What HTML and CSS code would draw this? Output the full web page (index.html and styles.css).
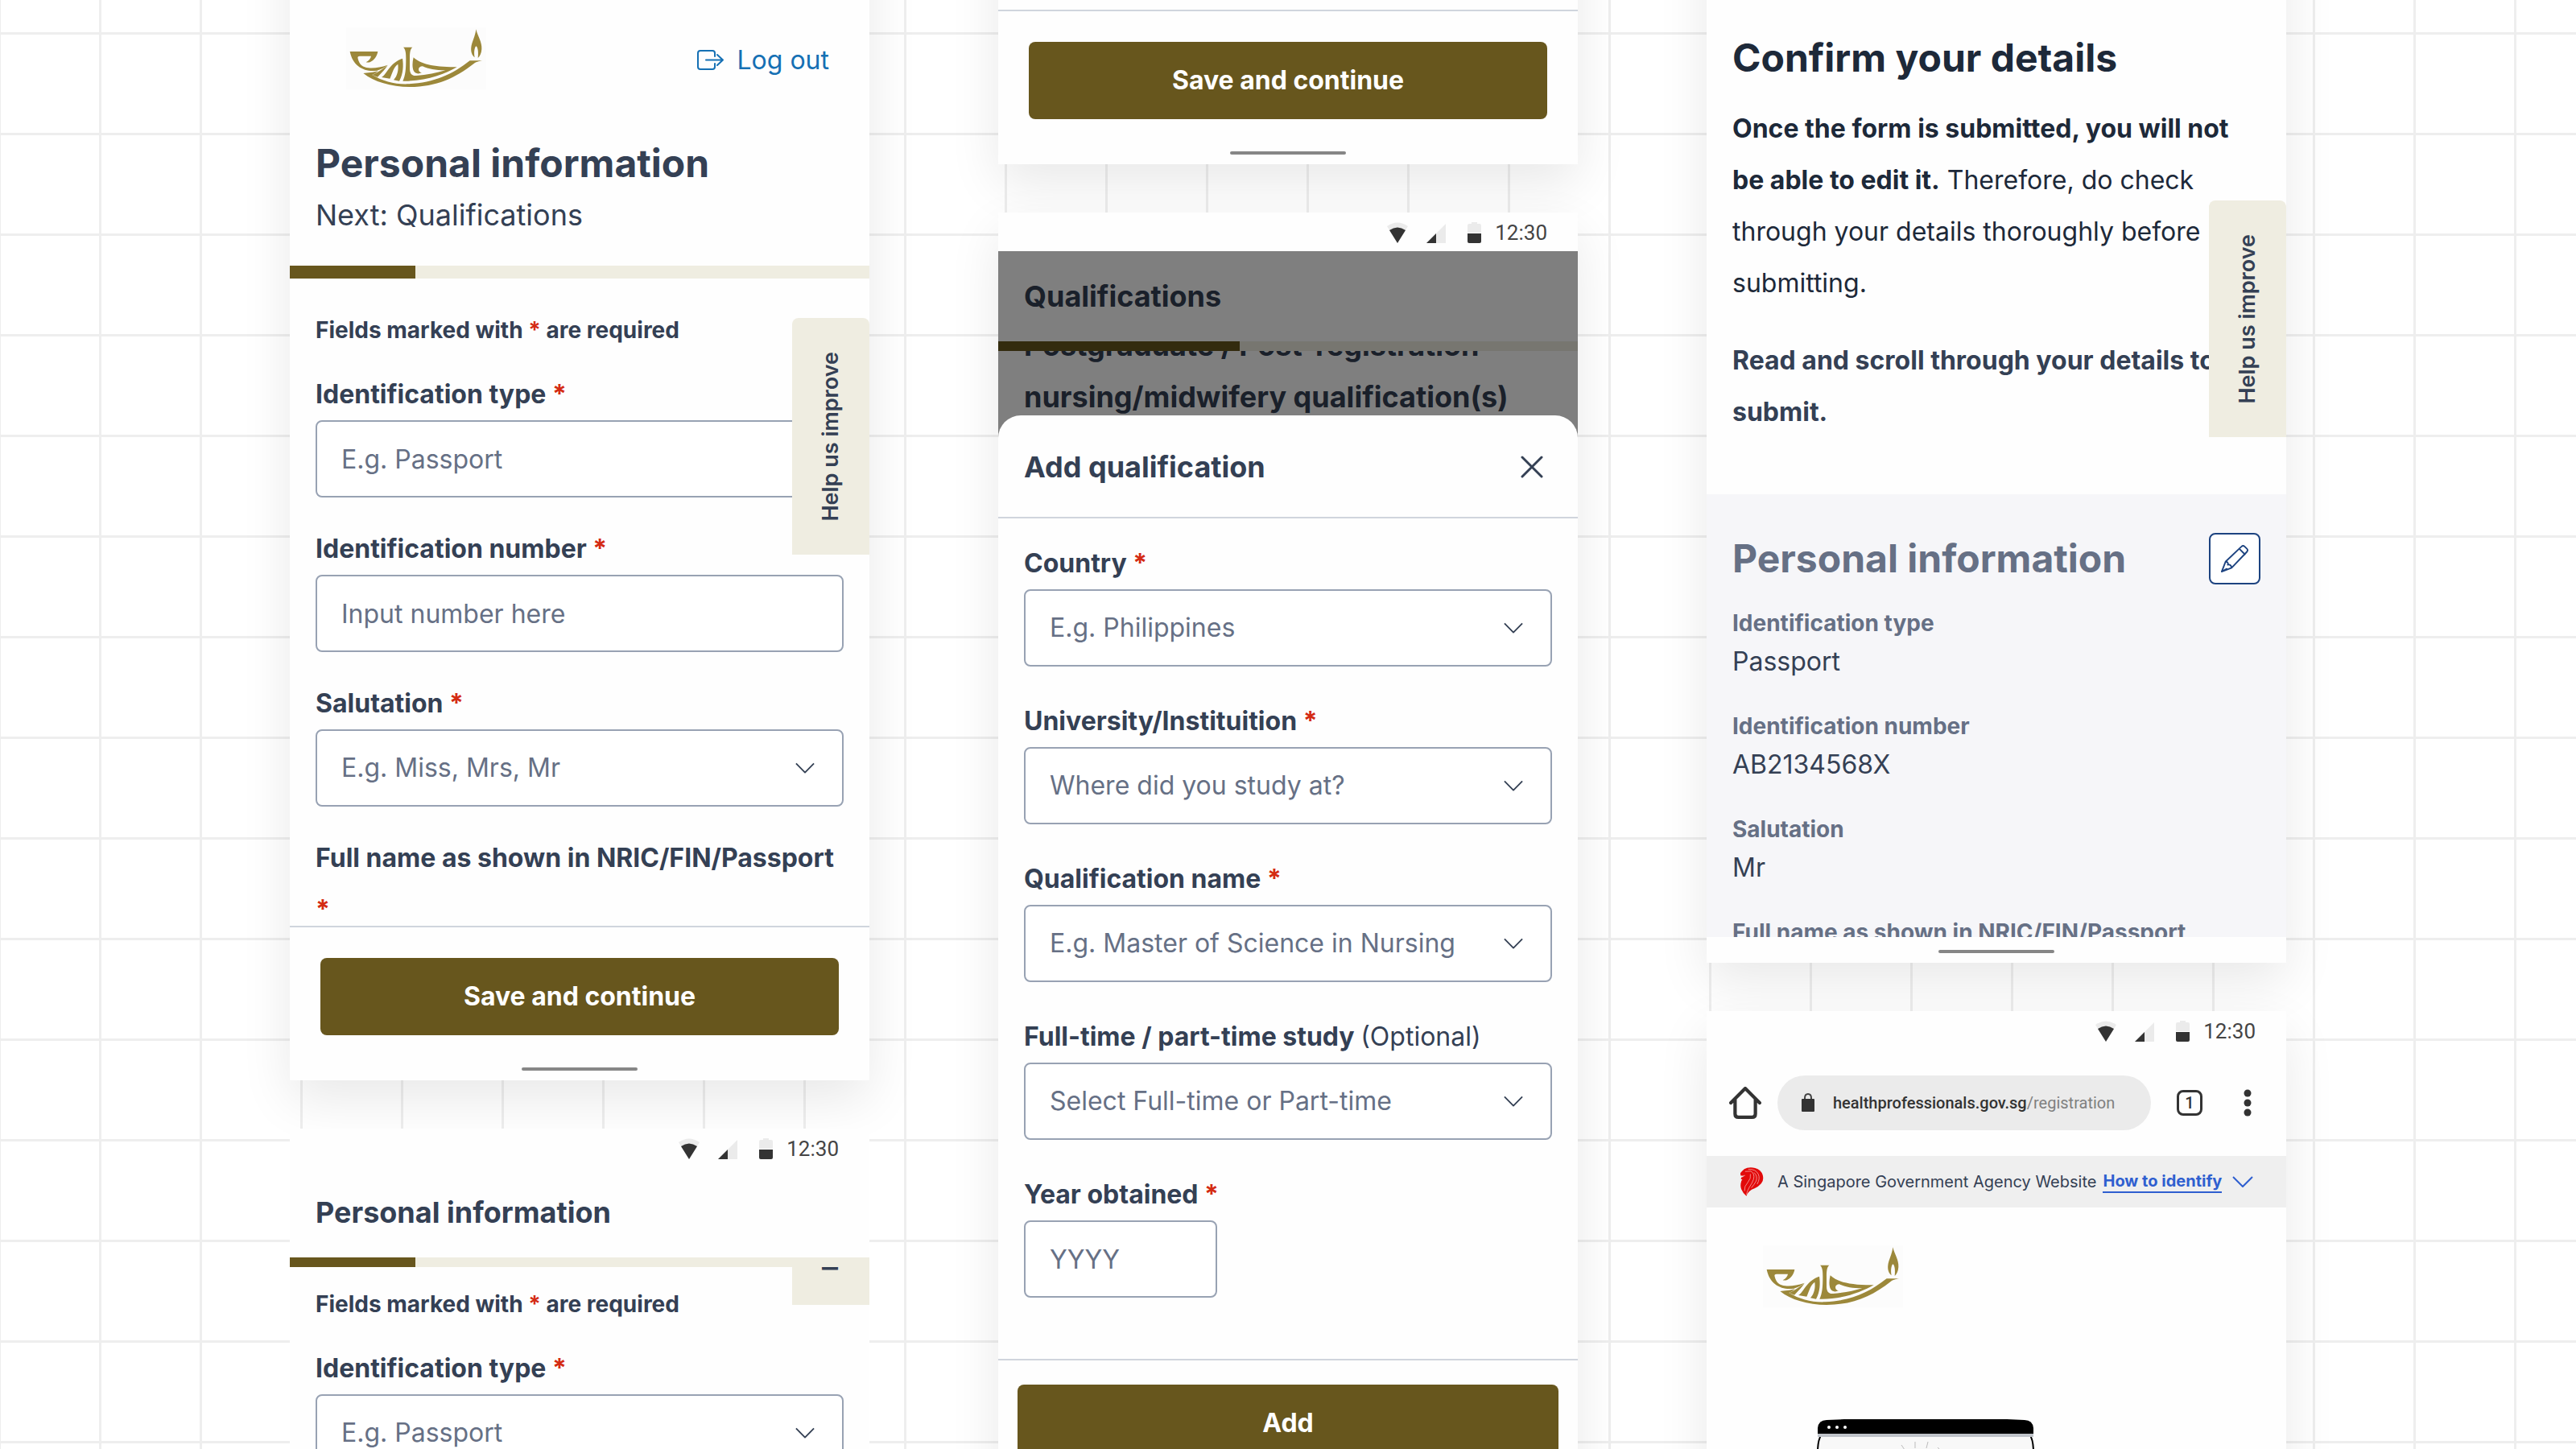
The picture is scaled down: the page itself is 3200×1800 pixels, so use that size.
FILE: index.html
```html
<!DOCTYPE html>
<html lang="en">
<head>
<meta charset="utf-8">
<meta name="viewport" content="width=device-width, initial-scale=1">
<title>Nursing registration</title>
<link rel="stylesheet" href="styles.css">
</head>
<body>
<svg class="sprite" aria-hidden="true">
  <symbol id="chevron" viewBox="0 0 26 14"><path d="M1 1l12 12L25 1" fill="none" stroke="currentColor" stroke-width="2" stroke-linejoin="round"/></symbol>
  <symbol id="lamp" viewBox="33 43 522 231">
    <rect x="33" y="43" width="522" height="231" fill="#fcfcfc"/>
    <g fill="#9c883a">
      <path d="M517 50C523 76 540 98 538 124C537 140 531 151 524 157C526 138 525 118 517 113C510 120 509 140 512 155C502 147 497 133 499 117C501 98 514 78 517 50Z"/>
      <path d="M47 133H151C148 151 137 166 123 172C118 174 112 174 107 173C118 167 124 160 126 150H84C77 150 75 153 77 160C82 182 96 192 116 194C140 196 160 192 188 183C178 191 165 199 148 204C104 211 58 190 47 133Z"/>
      <path d="M97 214C112 212 135 211 152 205C144 213 136 218 130 220C170 244 215 256 265 254C360 250 430 218 494 167H541C525 170 518 172 510 177C440 232 370 264 270 265C200 265 135 245 97 214Z"/>
      <path d="M130 220C145 214 168 200 188 184C178 200 166 212 150 228Z"/>
      <path d="M165 229C185 217 196 174 243 159C247 185 246 215 231 243L210 239C224 223 229 202 226 180C210 190 206 212 196 234Z"/>
      <path d="M246 117H280C271 123 270 140 270 160V196C270 216 278 224 294 223C334 220 370 213 403 203C365 203 340 198 318 188C306 188 301 196 304 204C306 209 310 211 315 211C304 218 290 216 285 206C279 195 279 175 284 155C310 180 360 192 446 191C400 217 330 245 244 243C254 222 256 200 256 160C256 140 255 125 246 117Z"/>
    </g>
  </symbol>
  <symbol id="status" viewBox="0 0 117 28">
    <path d="M0 6Q13-3 26 6L13 27Z" fill="#ebebeb"/>
    <path d="M3 11Q13 4 23 11L13 27Z" fill="#333"/>
    <path d="M73 3V27H49Z" fill="#ebebeb"/>
    <path d="M61 15V27H49Z" fill="#333"/>
    <path d="M105 1h7v2h3q2 0 2 2v9h-17V5q0-2 2-2h3z" fill="#ebebeb"/>
    <path d="M100 15h17v10q0 2-2 2h-13q-2 0-2-2z" fill="#333"/>
  </symbol>
</svg>

<main class="board">
  <div class="column">
    <section class="phone phone--top">
      <header class="site-head">
        <div class="brand-row">
          <svg class="lamp" role="img" aria-label="Nursing board"><use href="#lamp"/></svg>
          <a class="logout" href="#logout">
            <svg viewBox="0 0 34 26" aria-hidden="true"><path d="M22 8V4q0-3-3-3H4Q1 1 1 4v17q0 3 3 3h15q3 0 3-3v-4M11 12.500H32M25 6l7 6.500L25 19" fill="none" stroke="currentColor" stroke-width="2" stroke-linejoin="round" stroke-linecap="round"/></svg>
            Log out
          </a>
        </div>
        <h1 class="title">Personal information</h1>
        <p class="next">Next: Qualifications</p>
      </header>
      <div class="progress progress--thick"><div class="progress-fill" style="width:21.7%"></div></div>
      <div class="viewport viewport--form">
        <form class="form">
          <p class="note">Fields marked with <span class="req">*</span> are required</p>
          <div class="field">
            <label for="id-type">Identification type <span class="req">*</span></label>
            <input id="id-type" type="text" placeholder="E.g. Passport">
          </div>
          <div class="field">
            <label for="id-number">Identification number <span class="req">*</span></label>
            <input id="id-number" type="text" placeholder="Input number here">
          </div>
          <div class="field">
            <label for="salutation">Salutation <span class="req">*</span></label>
            <div class="select"><select id="salutation"><option>E.g. Miss, Mrs, Mr</option></select><svg><use href="#chevron"/></svg></div>
          </div>
          <div class="field">
            <label for="full-name">Full name as shown in NRIC/FIN/Passport <span class="req">*</span></label>
            <input id="full-name" type="text">
          </div>
        </form>
        <button class="help help--form" type="button"><span>Help us improve</span></button>
      </div>
      <footer class="actions">
        <button class="primary" type="button">Save and continue</button>
        <div class="home-bar"></div>
      </footer>
    </section>

    <section class="phone phone--flat">
      <div class="status"><svg><use href="#status"/></svg><span>12:30</span></div>
      <h2 class="compact-title">Personal information</h2>
      <div class="progress"><div class="progress-fill" style="width:21.7%"></div></div>
      <div class="viewport">
        <form class="form form--tight">
          <p class="note">Fields marked with <span class="req">*</span> are required</p>
          <div class="field">
            <label for="id-type-2">Identification type <span class="req">*</span></label>
            <div class="select"><select id="id-type-2"><option>E.g. Passport</option></select><svg><use href="#chevron"/></svg></div>
          </div>
        </form>
        <button class="help help--scrolled" type="button"><span>Help us improve</span></button>
      </div>
    </section>
  </div>

  <div class="column">
    <section class="phone phone--top phone--ending">
      <footer class="actions">
        <button class="primary" type="button">Save and continue</button>
        <div class="home-bar"></div>
      </footer>
    </section>

    <section class="phone">
      <div class="status"><svg><use href="#status"/></svg><span>12:30</span></div>
      <div class="dimmed">
        <h2 class="compact-title">Qualifications</h2>
        <div class="progress"><div class="progress-fill" style="width:41.7%"></div></div>
        <div class="viewport">
          <h3 class="scrolled-heading">Postgraduate / Post-registration nursing/midwifery qualification(s)</h3>
        </div>
      </div>
      <div class="sheet">
        <header class="sheet-head">
          <h2>Add qualification</h2>
          <button type="button" class="close" aria-label="Close"><svg viewBox="0 0 28 28"><path d="M2 2l24 24M26 2L2 26" fill="none" stroke="currentColor" stroke-width="3" stroke-linecap="round"/></svg></button>
        </header>
        <form class="form form--sheet">
          <div class="field">
            <label for="country">Country <span class="req">*</span></label>
            <div class="select"><select id="country"><option>E.g. Philippines</option></select><svg><use href="#chevron"/></svg></div>
          </div>
          <div class="field">
            <label for="university">University/Instituition <span class="req">*</span></label>
            <div class="select"><select id="university"><option>Where did you study at?</option></select><svg><use href="#chevron"/></svg></div>
          </div>
          <div class="field">
            <label for="qualification">Qualification name <span class="req">*</span></label>
            <div class="select"><select id="qualification"><option>E.g. Master of Science in Nursing</option></select><svg><use href="#chevron"/></svg></div>
          </div>
          <div class="field">
            <label for="study-mode">Full-time / part-time study <span class="optional">(Optional)</span></label>
            <div class="select"><select id="study-mode"><option>Select Full-time or Part-time</option></select><svg><use href="#chevron"/></svg></div>
          </div>
          <div class="field">
            <label for="year">Year obtained <span class="req">*</span></label>
            <input id="year" class="short" type="text" placeholder="YYYY">
          </div>
        </form>
        <footer class="sheet-actions"><button class="primary" type="button">Add</button></footer>
      </div>
    </section>
  </div>

  <div class="column">
    <section class="phone phone--top">
      <div class="confirm">
        <h1 class="title title--dark">Confirm your details</h1>
        <p><strong>Once the form is submitted, you will not be able to edit it.</strong> Therefore, do check through your details thoroughly before submitting.</p>
        <p class="instruction">Read and scroll through your details to submit.</p>
        <button class="help help--confirm" type="button"><span>Help us improve</span></button>
      </div>
      <div class="summary">
        <div class="summary-head">
          <h2>Personal information</h2>
          <button type="button" class="edit" aria-label="Edit personal information"><svg viewBox="0 0 38 38"><path d="M2 36l5-13L28 3q2-2 4 0l3 3q2 2 0 4L15 31zM25 6l8 8M7 23q4 0 3 4q4-1 5 4M2 36l7-4" fill="none" stroke="currentColor" stroke-width="2" stroke-linejoin="round"/></svg></button>
        </div>
        <dl>
          <div><dt>Identification type</dt><dd>Passport</dd></div>
          <div><dt>Identification number</dt><dd>AB2134568X</dd></div>
          <div><dt>Salutation</dt><dd>Mr</dd></div>
          <div><dt>Full name as shown in NRIC/FIN/Passport</dt></div>
        </dl>
      </div>
      <div class="gesture"><div class="home-bar"></div></div>
    </section>

    <section class="phone">
      <div class="status"><svg><use href="#status"/></svg><span>12:30</span></div>
      <nav class="browser">
        <button type="button" class="bare" aria-label="Home"><svg class="home" viewBox="0 0 38 38"><path d="M2 19L19 2L36 19M7 15V32q0 4 4 4H27q4 0 4-4V15" fill="none" stroke="#333" stroke-width="4" stroke-linecap="round" stroke-linejoin="round"/></svg></button>
        <div class="address">
          <svg class="lock" viewBox="0 0 18 24"><path d="M5 9V6q0-5 4-5t4 5v3" fill="none" stroke="#444" stroke-width="2"/><rect x="1" y="7" width="16" height="16" rx="1" fill="#333"/></svg>
          <span class="url"><b>healthprofessionals.gov.sg</b>/registration</span>
        </div>
        <button type="button" class="tabs" aria-label="Open tabs">1</button>
        <button type="button" class="bare" aria-label="More"><svg class="dots" viewBox="0 0 10 34"><g fill="#333"><circle cx="5" cy="5" r="4.500"/><circle cx="5" cy="17" r="4.500"/><circle cx="5" cy="29" r="4.500"/></g></svg></button>
      </nav>
      <div class="gov">
        <svg class="lion" viewBox="64 358 90 110" aria-hidden="true">
          <path d="M66 380L72 373Q80 362 92 360Q108 357 122 361Q145 367 151 388Q156 408 145 420Q136 431 120 438Q96 446 89 467Q76 457 70 442Q64 428 70 410Q73 402 77 403L68 404L70 396L80 394L67 389Z" fill="#e20a0a"/>
          <path d="M84 374L106 373Q122 382 116 404Q110 420 100 434Q92 448 89 462M118 378Q132 390 126 410Q120 422 108 436M104 384Q108 400 94 416Q80 430 82 448M96 366Q124 364 134 384Q142 400 130 422M68 392L84 389" fill="none" stroke="#f7caca" stroke-width="2"/>
        </svg>
        <span>A Singapore Government Agency Website</span>
        <a href="#identify">How to identify</a>
        <svg class="gov-chevron"><use href="#chevron"/></svg>
      </div>
      <div class="landing">
        <svg class="lamp" role="img" aria-label="Nursing board"><use href="#lamp"/></svg>
        <svg class="illustration" viewBox="0 0 270 200" aria-hidden="true">
          <path d="M6 18Q1 26 1 40V199H269V40Q269 26 264 18Z" fill="#f8f8f8" stroke="#000" stroke-width="2"/>
          <path d="M1 18H269V22H1Z" fill="#bfc3c9"/>
          <path d="M1 18V11Q2 1 12 1L34 0H236L258 1Q268 1 269 11V18Z" fill="#000"/>
          <circle cx="15" cy="10" r="2" fill="#fff"/><circle cx="25" cy="10" r="2" fill="#fff"/><circle cx="35" cy="10" r="2" fill="#fff"/>
          <path d="M105 32l4 6M122 28v8M138 28l-2 8M150 35l2 2" stroke="#bbb" fill="none"/>
        </svg>
      </div>
    </section>
  </div>
</main>
</body>
</html>
```
FILE: styles.css
```css
* { box-sizing: border-box; }
h1, h2, h3, p, dl, dd { margin: 0; }
button, input, select { font: inherit; }
svg { display: block; flex: none; }

body {
  margin: 0;
  height: 100vh;
  overflow: hidden;
  font-family: Inter, "Liberation Sans", sans-serif;
  font-size: 32px;
  line-height: 64px;
  color: #344054;
  background-color: #fff;
  background-image:
    linear-gradient(to right, #eee 3px, transparent 3px),
    linear-gradient(to bottom, #eee 3px, transparent 3px);
  background-size: 125px 125px;
  background-position: -2px 0, 0 40px;
}
.sprite { position: absolute; width: 0; height: 0; }

.board {
  display: grid;
  grid-template-columns: repeat(3, minmax(0, 1fr));
  gap: 160px;
  padding: 0 360px;
}
.column { display: flex; flex-direction: column; gap: 60px; }

.phone {
  background: #fefefe;
  box-shadow: 0 24px 60px rgba(0, 0, 0, .09);
}
.phone--top { margin-top: -160px; padding-top: 160px; }
.phone--ending { margin-top: -148px; }
.phone--flat { box-shadow: none; }
.column .phone:nth-child(2) { position: relative; }

/* Site header */
.site-head { padding: 34px 32px 35px; }
.brand-row {
  display: flex;
  align-items: center;
  justify-content: space-between;
  padding: 0 18px 0 38px;
  margin-bottom: 62px;
}
.lamp { width: 174px; height: 77px; }
.logout {
  display: flex;
  align-items: center;
  gap: 16px;
  padding-top: 4px;
  color: #1570b4;
  text-decoration: none;
}
.logout svg { width: 34px; height: 26px; }
.title { font-size: 48px; line-height: 60px; font-weight: 700; }
.title--dark { color: #1d2939; }
.next { font-size: 36px; line-height: 56px; margin-top: 6px; }

.progress { height: 12px; background: #efede1; }
.progress--thick { height: 16px; }
.progress-fill { height: 100%; background: #67561d; }

.viewport { position: relative; overflow: hidden; }
.viewport--form { height: 804px; }

/* Forms */
.form { display: flex; flex-direction: column; gap: 32px; padding: 36px 32px; }
.form--tight { padding-top: 18px; }
.form--sheet { gap: 36px; padding: 24px 32px 76px; }
.note { font-size: 28px; line-height: 56px; font-weight: 700; margin-bottom: -12px; }
.req { color: #d42b13; }
.field { display: flex; flex-direction: column; }
.field label { font-weight: 700; }
.field label .optional { font-weight: 400; }
.field input, .field select {
  width: 100%;
  height: 96px;
  padding: 0 30px;
  border: 2px solid #98a2b3;
  border-radius: 8px;
  background: #fff;
  color: #667085;
  appearance: none;
}
.field input::placeholder { color: #667085; opacity: 1; }
.field .short { width: 240px; }
.select { display: grid; align-items: center; }
.select > * { grid-area: 1 / 1; }
.select svg {
  width: 24px;
  height: 14px;
  justify-self: end;
  margin-right: 36px;
  color: #344054;
  pointer-events: none;
}

.primary {
  display: block;
  width: 100%;
  height: 96px;
  border: 0;
  border-radius: 8px;
  background: #67561d;
  color: #fff;
  font-weight: 700;
}
.actions { padding: 38px 38px 12px; border-top: 2px solid #d0d5dd; }
.actions .primary { margin-bottom: 40px; }
.home-bar { width: 144px; height: 4px; margin: 0 auto; border-radius: 2px; background: #868686; }

.help {
  position: absolute;
  right: 0;
  width: 96px;
  height: 294px;
  padding: 0;
  display: flex;
  align-items: center;
  justify-content: center;
  border: 0;
  border-radius: 8px 8px 0 0;
  background: #efede1;
  color: #344054;
  font-size: 27px;
  font-weight: 600;
  line-height: 40px;
}
.help span { writing-mode: vertical-rl; transform: rotate(180deg); }
.help--form { top: 49px; }
.help--scrolled { top: -247px; }
.help--confirm { top: 249px; }

/* Compact screens */
.status {
  display: flex;
  justify-content: flex-end;
  align-items: center;
  gap: 17px;
  height: 48px;
  padding: 1px 38px 0 0;
  font-family: Roboto, sans-serif;
  font-size: 26px;
  line-height: 48px;
  color: #444;
}
.status svg { width: 117px; height: 28px; }
.compact-title { font-size: 36px; line-height: 112px; font-weight: 700; padding: 0 32px; }

/* Bottom sheet */
.dimmed { position: relative; height: 264px; }
.dimmed::after { content: ""; position: absolute; inset: 0; background: rgba(0, 0, 0, .5); }
.scrolled-heading { font-size: 36px; font-weight: 700; padding: 0 32px; margin-top: -39px; }
.sheet {
  position: relative;
  margin-top: -60px;
  border-radius: 28px 28px 0 0;
  background: #fefefe;
}
.sheet-head {
  display: flex;
  align-items: center;
  justify-content: space-between;
  padding: 32px 43px 30px 32px;
  border-bottom: 2px solid #d0d5dd;
}
.sheet-head h2 { font-size: 36px; font-weight: 700; }
.bare, .close { padding: 0; border: 0; background: none; color: inherit; }
.close svg { width: 28px; height: 28px; }
.sheet-actions { padding: 30px 24px; border-top: 2px solid #d0d5dd; }

/* Confirmation */
.confirm { position: relative; padding: 42px 32px 70px; color: #1d2939; }
.confirm p { margin-top: 32px; }
.confirm .title + p { margin-top: 26px; }
.confirm strong, .instruction { font-weight: 700; }
.instruction { color: #344054; }
.summary { height: 550px; overflow: hidden; padding: 48px 32px; background: #f6f6f9; }
.summary-head { display: flex; align-items: center; justify-content: space-between; margin-bottom: 24px; }
.summary-head h2 { font-size: 48px; font-weight: 700; color: #667085; }
.edit {
  display: grid;
  place-items: center;
  width: 64px;
  height: 64px;
  padding: 0;
  border: 2px solid #1d4380;
  border-radius: 8px;
  background: #fff;
  color: #1d4380;
}
.edit svg { width: 36px; height: 36px; }
.summary dl { display: grid; gap: 32px; line-height: 48px; }
.summary dt { font-size: 28px; font-weight: 700; color: #667085; }
.gesture { padding: 16px 0 12px; }

/* Browser chrome */
.browser {
  display: flex;
  align-items: center;
  height: 132px;
  padding: 0 43px 0 28px;
}
.home { width: 40px; height: 40px; }
.address {
  flex: 1;
  display: flex;
  align-items: center;
  gap: 22px;
  height: 68px;
  margin: 0 32px 0 20px;
  padding-left: 29px;
  border-radius: 34px;
  background: #ebebeb;
}
.lock { width: 18px; height: 24px; }
.url { font-family: Roboto, sans-serif; font-size: 20px; line-height: 68px; color: #808080; }
.url b { font-weight: 500; color: #333; }
.tabs {
  width: 32px;
  height: 32px;
  margin-right: 51px;
  padding: 0;
  border: 3px solid #333;
  border-radius: 8px;
  background: none;
  color: #333;
  font: 500 20px/26px Roboto, sans-serif;
}
.dots { width: 10px; height: 34px; }
.gov {
  display: flex;
  align-items: center;
  height: 64px;
  padding-left: 41px;
  background: #efefef;
  font-size: 20px;
  line-height: 64px;
}
.lion { width: 30px; height: 36px; margin-right: 17px; }
.gov a {
  margin: 0 13px 0 8px;
  border-bottom: 2px solid #2f5fd0;
  color: #2f5fd0;
  font-weight: 700;
  line-height: 26px;
  text-decoration: none;
}
.gov-chevron { width: 26px; height: 14px; color: #2f5fd0; }
.landing { padding: 47px 70px 0; }
.illustration { width: 272px; height: 200px; margin: 139px 0 0 66px; }
```
